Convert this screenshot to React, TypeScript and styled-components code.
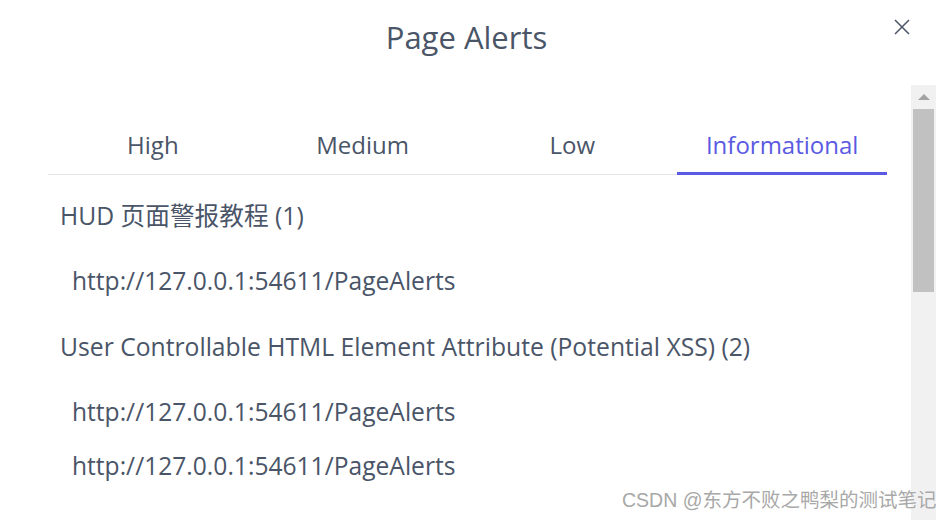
import React from "react";
import styled, { createGlobalStyle } from "styled-components";

const Global = createGlobalStyle`
  html, body { margin: 0; padding: 0; background: #fff; }
  body { font-family: "Open Sans", "Noto Sans CJK SC", sans-serif; }
`;

const Dialog = styled.div`
  position: relative;
  width: 949px;
  height: 520px;
  overflow: hidden;
  background: #fff;
  display: flex;
  flex-direction: column;
`;

const Header = styled.header`
  height: 85px;
  flex: none;
  display: flex;
  justify-content: center;
  align-items: flex-start;
  padding-right: 16px;
`;

const Title = styled.h1`
  margin: 16px 0 0;
  font-size: 31px;
  line-height: 42px;
  font-weight: 400;
  color: #4a5568;
`;

const CloseButton = styled.button`
  position: absolute;
  top: 17px;
  left: 892px;
  width: 20px;
  height: 20px;
  padding: 0;
  border: none;
  background: transparent;
  display: flex;
  align-items: center;
  justify-content: center;
`;

const Body = styled.div`
  flex: 1;
  display: flex;
  min-height: 0;
  padding-right: 13px;
`;

const Content = styled.div`
  flex: 1;
  padding: 0 24px 0 48px;
  min-width: 0;
`;

const TabBar = styled.div`
  margin-top: 40px;
  display: grid;
  grid-template-columns: repeat(4, 1fr);
  border-bottom: 1px solid #e6e6e6;
`;

const Tab = styled.div<{ $active?: boolean }>`
  height: 47px;
  margin-bottom: -1px;
  border-bottom: 3px solid ${(p) => (p.$active ? "#5a5ae2" : "transparent")};
  color: ${(p) => (p.$active ? "#5a5ae2" : "#4a5568")};
  font-size: 24px;
  line-height: 40px;
  text-align: center;
`;

const Section = styled.section`
  padding-left: 12px;
  margin-top: 25px;
  & + & { margin-top: 34px; }
`;

const AlertTitle = styled.div`
  font-size: 24.7px;
  line-height: 32px;
  color: #4a5568;
  margin-bottom: 33px;
  white-space: nowrap;
`;

const UrlList = styled.div`
  display: flex;
  flex-direction: column;
  gap: 22px;
  padding-left: 12px;
`;

const Url = styled.div`
  font-size: 24.6px;
  line-height: 32px;
  color: #4a5568;
`;

const Scrollbar = styled.div`
  width: 25px;
  flex: none;
  background: #f1f1f1;
  display: flex;
  flex-direction: column;
  align-items: center;
`;

const ScrollArrow = styled.div`
  height: 24px;
  width: 100%;
  display: flex;
  align-items: center;
  justify-content: center;
  &::before {
    content: "";
    border-left: 6px solid transparent;
    border-right: 6px solid transparent;
    border-bottom: 6px solid #a3a3a3;
  }
`;

const Thumb = styled.div`
  width: 21px;
  height: 183px;
  background: #c1c1c1;
`;

const Watermark = styled.div`
  position: absolute;
  left: 622px;
  top: 487px;
  font-family: "Liberation Sans", "Noto Sans CJK SC", sans-serif;
  font-size: 19.5px;
  line-height: 26px;
  color: #a8a8a8;
  text-shadow: 0 0 1px #fff;
  white-space: nowrap;
`;

const sections = [
  { title: "HUD 页面警报教程 (1)", urls: ["http://127.0.0.1:54611/PageAlerts"] },
  {
    title: "User Controllable HTML Element Attribute (Potential XSS) (2)",
    urls: ["http://127.0.0.1:54611/PageAlerts", "http://127.0.0.1:54611/PageAlerts"],
  },
];

const tabs = ["High", "Medium", "Low", "Informational"];

export default function App() {
  return (
    <>
      <Global />
      <Dialog>
        <Header>
          <Title>Page Alerts</Title>
        </Header>
        <CloseButton aria-label="Close">
          <svg width="18" height="18" viewBox="0 0 18 18">
            <path d="M2 2 L16 16 M16 2 L2 16" stroke="#4a5568" strokeWidth="1.5" fill="none" />
          </svg>
        </CloseButton>
        <Body>
          <Content>
            <TabBar>
              {tabs.map((t) => (
                <Tab key={t} $active={t === "Informational"}>
                  {t}
                </Tab>
              ))}
            </TabBar>
            {sections.map((s) => (
              <Section key={s.title}>
                <AlertTitle>{s.title}</AlertTitle>
                <UrlList>
                  {s.urls.map((u, i) => (
                    <Url key={i}>{u}</Url>
                  ))}
                </UrlList>
              </Section>
            ))}
          </Content>
          <Scrollbar>
            <ScrollArrow />
            <Thumb />
          </Scrollbar>
        </Body>
        <Watermark>CSDN @东方不败之鸭梨的测试笔记</Watermark>
      </Dialog>
    </>
  );
}
